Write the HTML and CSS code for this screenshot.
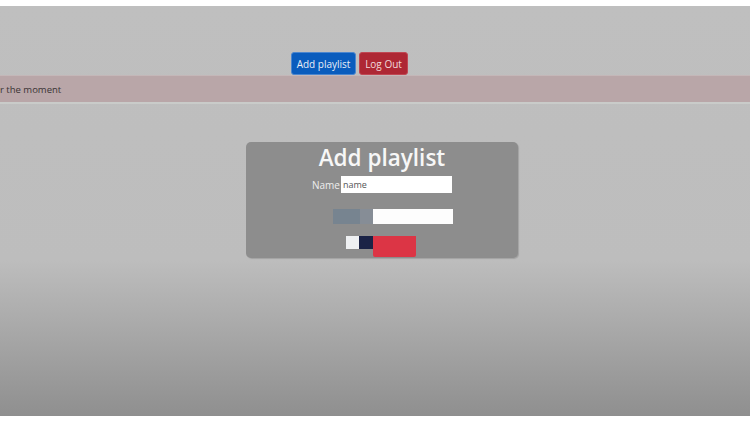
FILE: index.html
```html
<!DOCTYPE html>
<html lang="en">
<head>
    <meta charset="UTF-8">
    <meta name="viewport" content="width=device-width, initial-scale=1.0">
    <title>Playlists</title>
    <link rel="stylesheet" href="styles.css">
</head>
<body>
    <div class="screen">
        <nav class="nav">
            <button class="btn btn-primary">Add playlist</button>
            <button class="btn btn-danger">Log Out</button>
        </nav>

        <div class="alert">r the moment</div>

        <!-- Add playlist form -->
        <div class="modal">
            <h2 class="modal-title">Add playlist</h2>
            <div class="row row-name">
                <label class="label" for="name">Name</label>
                <input class="input" id="name" type="text" placeholder="name">
            </div>
            <div class="row row-file">
                <span class="file-btn"></span>
                <span class="file-gap"></span>
                <span class="file-input"></span>
            </div>
            <div class="row row-actions">
                <span class="chk chk-light"></span>
                <span class="chk chk-dark"></span>
                <span class="submit"></span>
            </div>
        </div>
    </div>
</body>
</html>
```

FILE: styles.css
```css
/* page */
html, body {
    margin: 0;
    padding: 0;
    background: #ffffff;
}

body {
    font-family: "Open Sans", "Noto Sans", sans-serif;
    height: 422px;
    overflow: hidden;
}

.screen {
    margin-top: 6px;
    height: 410px;
    padding-top: 46px;
    box-sizing: border-box;
    background: linear-gradient(#bfbfbf 0%, #bdbdbd 62%, #8f8f8f 100%);
}

/* top buttons */
.nav {
    display: flex;
    gap: 3px;
    margin-left: 291px;
}

.btn {
    height: 23px;
    padding: 0;
    font-family: inherit;
    font-size: 10px;
    white-space: nowrap;
    color: #e9eef6;
    border-radius: 3px;
    border: 1px solid transparent;
}

.btn-primary {
    width: 65px;
    background-color: #0a5cbd;
    border-color: #4b86cf;
}

.btn-danger {
    width: 49px;
    background-color: #ae2734;
    border-color: #c04753;
    color: #f1d9db;
}

/* alert bar */
.alert {
    height: 29px;
    line-height: 28px;
    font-size: 9.5px;
    color: #3a3434;
    background-color: #b9a6a8;
    border-top: 1px solid #c4b7b8;
    border-bottom: 2px solid #c9cbc9;
    box-sizing: border-box;
}

/* form box */
.modal {
    margin: 38px 0 0 246px;
    width: 272px;
    height: 116px;
    background-color: #8d8d8d;
    border-radius: 5px;
    box-shadow: 1px 1px 1px #a2a2a2;
}

.modal-title {
    margin: 0;
    padding-top: 1px;
    text-align: center;
    color: #f7f7f7;
    font-size: 22.5px;
    font-weight: 600;
    line-height: 30px;
}

.row {
    display: flex;
    align-items: center;
}

.row-name {
    margin: 3px 0 0 66px;
}

.label {
    font-size: 10px;
    color: #eeeeee;
    margin-right: 1px;
}

.input {
    width: 111px;
    height: 17px;
    box-sizing: border-box;
    border: none;
    padding: 0 2px;
    font-family: inherit;
    font-size: 9px;
    color: #555555;
}

.input::placeholder {
    color: #555555;
}

.row-file {
    margin: 16px 0 0 87px;
    height: 15px;
}

.file-btn {
    width: 27px;
    height: 15px;
    background-color: #778490;
}

.file-gap {
    width: 13px;
    height: 15px;
    background-color: #868d96;
}

.file-input {
    width: 80px;
    height: 15px;
    background-color: #fdfdfd;
}

.row-actions {
    margin: 12px 0 0 100px;
    align-items: flex-start;
}

.chk {
    width: 13px;
    height: 13px;
}

.chk-light {
    background-color: #eef0f2;
}

.chk-dark {
    width: 14px;
    background-color: #1b2346;
}

.submit {
    width: 43px;
    height: 21px;
    background-color: #dc3545;
    border-radius: 0 0 2px 2px;
}
```
